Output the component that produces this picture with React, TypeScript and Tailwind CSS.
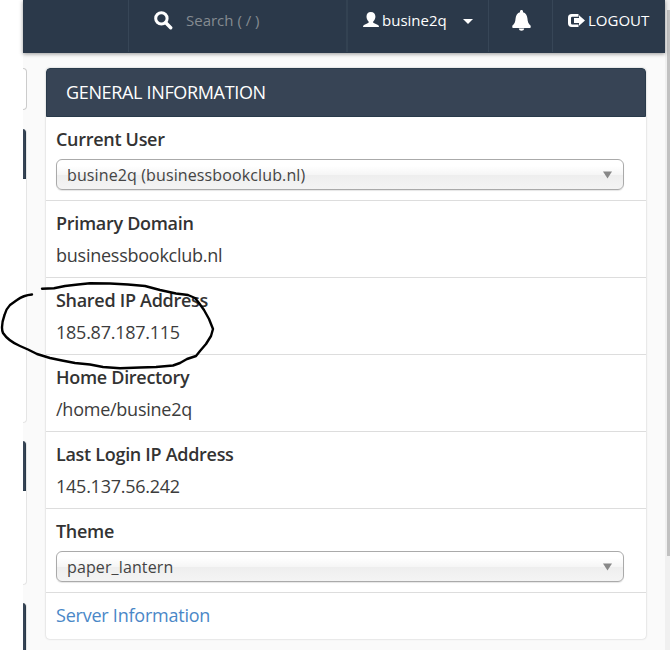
import type { ReactNode } from "react";

function Row({ label, children, tall = false }: { label: string; children: ReactNode; tall?: boolean }) {
  return (
    <div className={`shrink-0 border-b border-[#ddd] bg-white px-[10px] pt-[10px] ${tall ? "h-[84px]" : "h-[77px]"}`}>
      <div className="text-[18px] leading-[25px] font-semibold tracking-[-0.3px] whitespace-nowrap text-[#333]">{label}</div>
      {children}
    </div>
  );
}

function Value({ children }: { children: ReactNode }) {
  return <div className="mt-[7px] text-[18px] leading-[25px] tracking-[-0.25px] whitespace-nowrap text-[#3c3c3c]">{children}</div>;
}

function Select({ value }: { value: string }) {
  return (
    <div className="mt-[7px] flex h-[31px] w-[568px] items-center justify-between rounded-[6px] border border-[#aaa] bg-[linear-gradient(to_bottom,#fff_20%,#f6f6f6_50%,#eee_52%,#f4f4f4_100%)] pr-[11px] pl-[10px] shadow-[0_1px_1px_rgba(0,0,0,0.1)]">
      <span className="pt-px text-[16px] leading-[28px] tracking-[0.12px] text-[#444]">{value}</span>
      <svg width="9" height="8" viewBox="0 0 9 8">
        <path d="M0 .5h9L4.500 7.500z" fill="#888" />
      </svg>
    </div>
  );
}

function SideBlock({ className }: { className: string }) {
  return (
    <div className={`w-[4px] shrink-0 overflow-hidden rounded-r-[4px] border-r border-b border-[#e5e5e5] bg-white ${className}`}>
      <div className="h-[50px] w-[3px] rounded-tr-[3px] border-r border-b border-[#293a4a] bg-[#374455]" />
    </div>
  );
}

export default function App() {
  return (
    <div className="relative flex h-[650px] w-[670px] overflow-hidden bg-white pl-[23px] font-['Open_Sans','Noto_Sans',sans-serif]">
      <div className="flex w-[642px] flex-col bg-[#fafafa]">
        <header className="z-10 flex h-[53px] shrink-0 bg-[#2b394a] text-white shadow-[0_1px_4px_rgba(0,0,0,0.4)]">
          <div className="h-[52px] w-[106px] border-r border-[#374657]" />
          <div className="flex h-[52px] w-[219px] border-r-2 border-[#334252] pl-[25px]">
            <svg width="19" height="19" viewBox="0 0 19 19" className="mt-[11px]" fill="none" stroke="#fff">
              <circle cx="7.4" cy="7.4" r="5.7" strokeWidth="3" />
              <path d="M11.8 11.800l4.900 4.900" strokeWidth="3.4" strokeLinecap="round" />
            </svg>
            <span className="mt-[10px] ml-[13px] text-[15px] leading-[21px] text-[#858b91]">Search ( / )</span>
          </div>
          <div className="flex h-[52px] w-[141px] border-r border-[#374657] pl-[15px]">
            <svg width="16" height="16" viewBox="0 0 16 16" className="mt-[12px]" fill="#fff">
              <path d="M7.800 0C5 0 3.500 1.800 3.500 4.500c0 2.100.8 3.800 2.100 4.900v1.300L1 12.900Q0 13.500 0 15h16q0-1.500-1-2.100l-4.800-2.200V9.400c1.400-1.100 2.200-2.800 2.200-4.900C12.400 1.800 10.700 0 7.800 0z" />
            </svg>
            <span className="mt-[10px] ml-[3px] w-[67px] text-[15px] leading-[21px]">busine2q</span>
            <svg width="10" height="5" viewBox="0 0 10 5" className="mt-[19px] ml-[14px]" fill="#fff">
              <path d="M0 0h10L5 5z" />
            </svg>
          </div>
          <div className="flex h-[52px] w-[64px] border-r border-[#374657] pl-[23px]">
            <svg width="19" height="21" viewBox="0 0 19 21" className="mt-[10px]" fill="#fff">
              <path d="M9.500 0c1 0 1.500.7 1.500 1.600v.6c2.800.8 4.100 3.100 4.400 6 .3 3.800 1 5.500 3.300 7.500v1.500q0 .8-.8.800H1.100q-.8 0-.8-.8v-1.500c2.300-2 3-3.700 3.300-7.500.3-2.900 1.600-5.200 4.400-6v-.6C8 .7 8.500 0 9.500 0z" />
              <path d="M6.800 18.500h5.400C12 20 11 20.700 9.500 20.700S7 20 6.800 18.500z" />
            </svg>
          </div>
          <div className="flex pl-[15px]">
            <svg width="17" height="14" viewBox="0 0 17 14" className="mt-[14px]" fill="#fff">
              <path d="M10.500 0H3.700Q0 0 0 3.700v5.600Q0 13 3.700 13h6.800v-2.500H4.200Q3 10.500 3 9.300V3.900Q3 2.700 4.200 2.700h6.300z" />
              <path d="M11 1.200l6 5.300-6 5.200V9H6V4h5z" />
            </svg>
            <span className="mt-[10px] ml-[3px] whitespace-nowrap text-[15px] leading-[21px]">LOGOUT</span>
          </div>
        </header>

        <main className="flex min-h-0 grow">
          <aside className="flex w-[4px] flex-col pt-[15px]">
            <div className="h-[42px] shrink-0 rounded-r-[5px] border border-l-0 border-[#ccc] bg-white" />
            <SideBlock className="mt-[19px] h-[294px]" />
            <SideBlock className="mt-[18px] h-[144px]" />
            <SideBlock className="mt-[18px] h-[60px]" />
          </aside>
          <section className="mt-[15px] ml-[19px] flex h-[571px] w-[600px] flex-col overflow-hidden rounded-[4px] bg-white shadow-[0_0_2px_rgba(0,0,0,0.25)]">
            <h2 className="h-[49px] shrink-0 rounded-t-[4px] border border-[#293a4a] bg-[#374455] pt-[11px] pl-[19px] text-[18px] leading-[25px] tracking-[-0.34px] text-white">
              GENERAL INFORMATION
            </h2>
            <Row label="Current User" tall><Select value="busine2q (businessbookclub.nl)" /></Row>
            <Row label="Primary Domain"><Value>businessbookclub.nl</Value></Row>
            <Row label="Shared IP Address"><Value>185.87.187.115</Value></Row>
            <Row label="Home Directory"><Value>/home/busine2q</Value></Row>
            <Row label="Last Login IP Address"><Value>145.137.56.242</Value></Row>
            <Row label="Theme" tall><Select value="paper_lantern" /></Row>
            <div className="pt-[10px] pl-[10px] text-[18px] leading-[25px] tracking-[-0.23px] text-[#4a87c7]">Server Information</div>
          </section>
        </main>
      </div>
      <div className="h-full w-[5px] bg-[#f0f0f0] pt-[10px] pl-[2px]">
        <div className="h-[546px] bg-[#c1c1c1]" />
      </div>
      <svg className="absolute top-[270px] left-0" width="230" height="110" viewBox="0 0 230 110" fill="none" stroke="#000" strokeWidth="2.4" strokeLinecap="round" strokeLinejoin="round">
        <path d="M32 24.500C26 25 21 27 17 30L10 35Q6 39 4.500 45C2 52 1 58 3 63C7 69 13 73 20 76L28 79.500L37 84L50 88L62 90.500L75 93L90 94.500L103 97L120 98.200L140 97.500L156 97L173 95.500L180 93L187 89L196 86L200 81L206 74L211 66L213 59L209 49L204 40L199 33L195 28L188 25L176 23.500L160 20L145 16L128 14.500L110 13.500L90 13.300L78 14.500L65 16L54 18.200L42 18.700" />
      </svg>
    </div>
  );
}
